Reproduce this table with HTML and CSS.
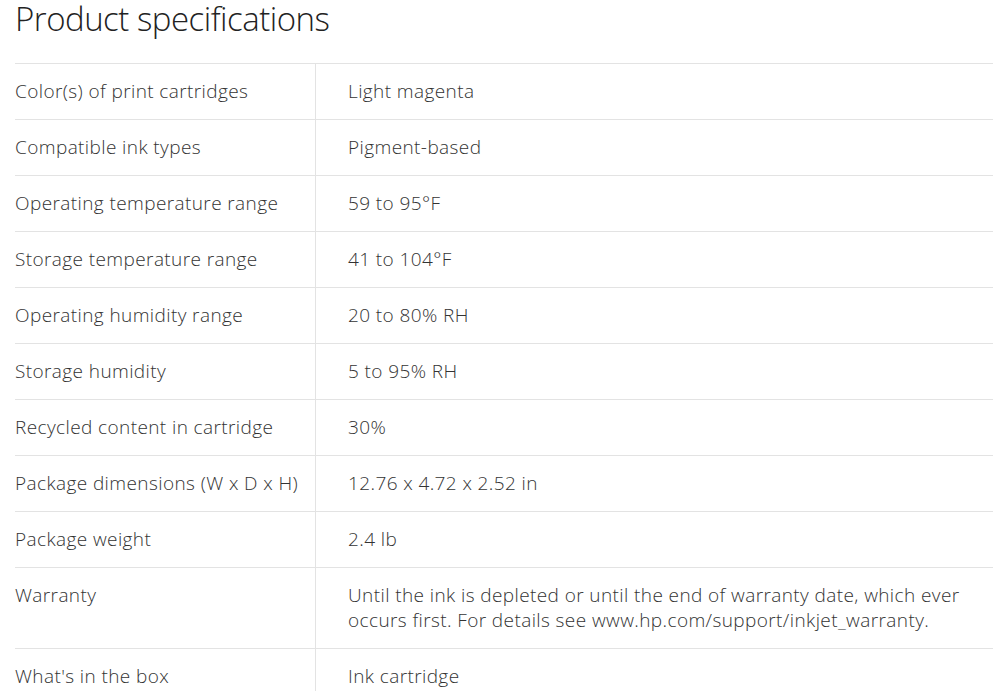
FILE: index.html
```html
<!DOCTYPE html>
<html lang="en">
<head>
<meta charset="utf-8">
<title>Product specifications</title>
<link rel="stylesheet" href="styles.css">
</head>
<body>
<section class="specs">
  <h2 class="specs-title">Product specifications</h2>
  <table class="specs-table">
    <tbody>
      <tr><th>Color(s) of print cartridges</th><td>Light magenta</td></tr>
      <tr><th>Compatible ink types</th><td>Pigment-based</td></tr>
      <tr><th>Operating temperature range</th><td>59 to 95°F</td></tr>
      <tr><th>Storage temperature range</th><td>41 to 104°F</td></tr>
      <tr><th>Operating humidity range</th><td>20 to 80% RH</td></tr>
      <tr><th>Storage humidity</th><td>5 to 95% RH</td></tr>
      <tr><th>Recycled content in cartridge</th><td>30%</td></tr>
      <tr><th>Package dimensions (W x D x H)</th><td>12.76 x 4.72 x 2.52 in</td></tr>
      <tr><th>Package weight</th><td>2.4 lb</td></tr>
      <tr><th>Warranty</th><td>Until the ink is depleted or until the end of warranty date, which ever occurs first. For details see www.hp.com/support/inkjet_warranty.</td></tr>
      <tr><th>What's in the box</th><td>Ink cartridge</td></tr>
    </tbody>
  </table>
</section>
</body>
</html>
```
FILE: styles.css
```css
html, body {
  margin: 0;
  padding: 0;
  background: #ffffff;
}
body {
  font-family: "Open Sans", "Noto Sans", sans-serif;
  color: #333333;
  overflow: hidden;
}
.specs {
  padding-left: 15px;
}
.specs-title {
  margin: 0;
  height: 61px;
  padding-top: 2px;
  font-size: 33px;
  line-height: 33px;
  font-weight: 300;
  color: #222222;
  letter-spacing: -0.5px;
}
.specs-table {
  width: 978px;
  border-collapse: collapse;
  border-top: 1px solid #e3e3e3;
}
.specs-table tr {
  border-bottom: 1px solid #e3e3e3;
}
.specs-table th,
.specs-table td {
  font-size: 19px;
  line-height: 25px;
  font-weight: 300;
  letter-spacing: 0.4px;
  text-align: left;
  vertical-align: top;
  padding: 15px 0 15px 0;
}
.specs-table th {
  width: 300px;
  border-right: 1px solid #e3e3e3;
  padding-left: 0;
}
.specs-table td {
  padding-left: 32px;
  padding-right: 30px;
}
```
